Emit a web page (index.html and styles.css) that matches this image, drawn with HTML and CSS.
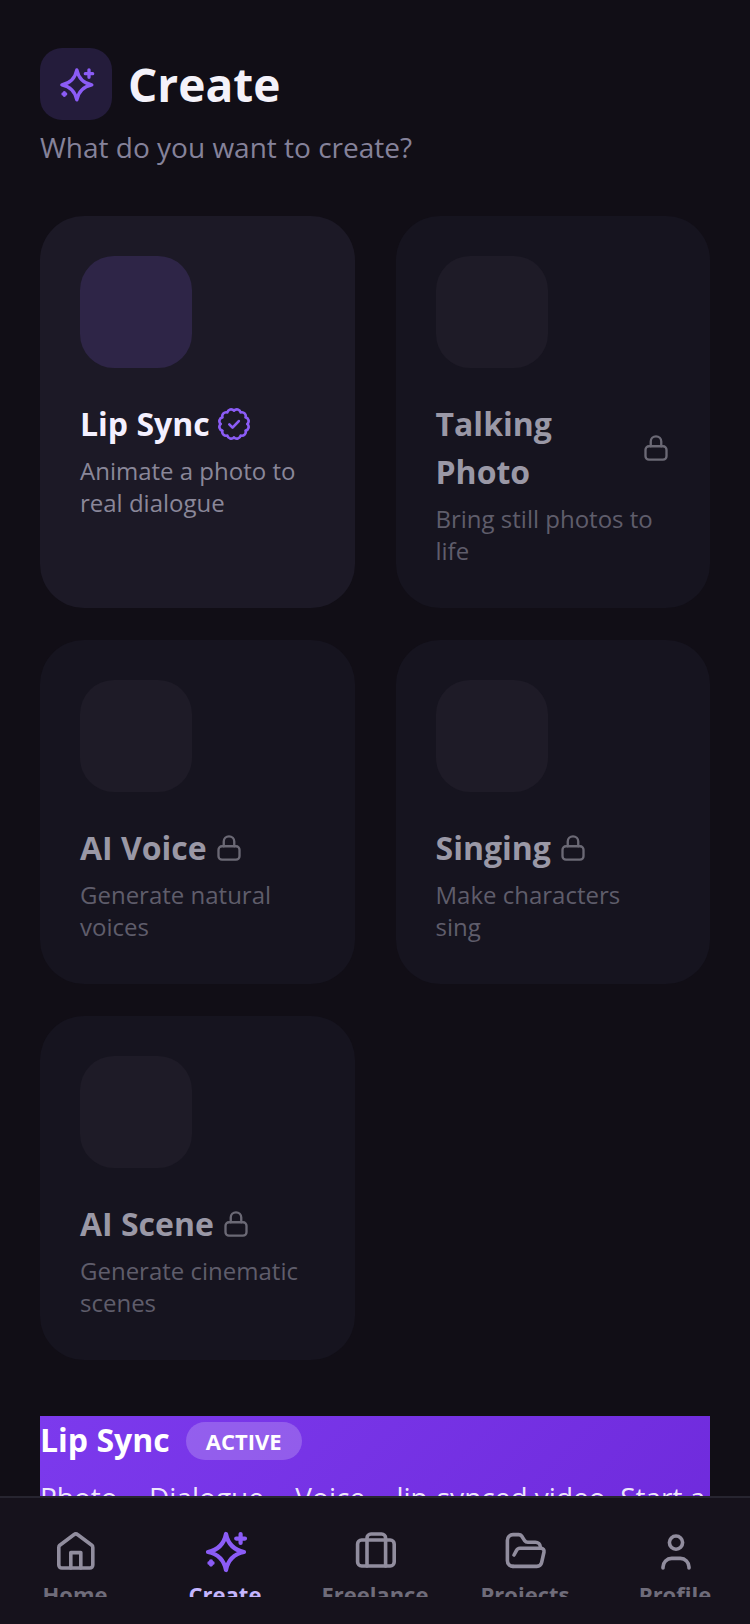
FILE: index.html
```html
<!DOCTYPE html>
<html lang="en">
<head>
<meta charset="utf-8">
<title>Create</title>
<link rel="stylesheet" href="styles.css">
</head>
<body>
<svg class="sprite" width="0" height="0" aria-hidden="true">
  <defs>
    <symbol id="sparkle" viewBox="0 0 24 24"><path d="M12.500 3.500C13.500 8.500 16.500 11.500 21.500 12.500 16.500 13.500 13.500 16.500 12.500 21.500 11.500 16.500 8.500 13.500 3.500 12.500 8.500 11.500 11.500 8.500 12.500 3.500Z"/><path d="M19.800 3.500V8M17.600 5.800H22"/><path d="M5 17.200V18.800M4.200 18H5.800"/></symbol>
    <symbol id="lock" viewBox="0 0 24 24"><rect x="3" y="10.500" width="18" height="11.500" rx="3"/><path d="M7.500 10.500V6.500a4.500 4.500 0 0 1 9 0v4"/></symbol>
    <symbol id="badge" viewBox="0 0 24 24"><path d="M22 12A2.900 2.900 0 0 1 20.660 17 2.900 2.900 0 0 1 17 20.660 2.900 2.900 0 0 1 12 22 2.900 2.900 0 0 1 7 20.660 2.900 2.900 0 0 1 3.340 17 2.900 2.900 0 0 1 2 12 2.900 2.900 0 0 1 3.340 7 2.900 2.900 0 0 1 7 3.340 2.900 2.900 0 0 1 12 2 2.900 2.900 0 0 1 17 3.340 2.900 2.900 0 0 1 20.660 7 2.900 2.900 0 0 1 22 12Z"/><path d="M8.500 12.300l2.400 2.400 4.700-4.900"/></symbol>
  </defs>
</svg>
<div class="app">
  <main class="content">
    <header class="page-head">
      <div class="title-row">
        <span class="head-icon"><svg class="icon icon-40 accent"><use href="#sparkle"/></svg></span>
        <h1 class="page-title">Create</h1>
      </div>
      <p class="page-sub">What do you want to create?</p>
    </header>

    <section class="grid">
      <article class="card card-active">
        <div class="card-icon"></div>
        <div class="card-title"><h2 class="card-name">Lip Sync</h2><svg class="icon icon-32 accent"><use href="#badge"/></svg></div>
        <p class="card-desc">Animate a photo to real dialogue</p>
      </article>
      <article class="card">
        <div class="card-icon"></div>
        <div class="card-title"><h2 class="card-name">Talking Photo</h2><svg class="icon icon-28 muted"><use href="#lock"/></svg></div>
        <p class="card-desc">Bring still photos to life</p>
      </article>
      <article class="card">
        <div class="card-icon"></div>
        <div class="card-title"><h2 class="card-name">AI Voice</h2><svg class="icon icon-28 muted"><use href="#lock"/></svg></div>
        <p class="card-desc">Generate natural voices</p>
      </article>
      <article class="card">
        <div class="card-icon"></div>
        <div class="card-title"><h2 class="card-name">Singing</h2><svg class="icon icon-28 muted"><use href="#lock"/></svg></div>
        <p class="card-desc">Make characters sing</p>
      </article>
      <article class="card">
        <div class="card-icon"></div>
        <div class="card-title"><h2 class="card-name">AI Scene</h2><svg class="icon icon-28 muted"><use href="#lock"/></svg></div>
        <p class="card-desc">Generate cinematic scenes</p>
      </article>
    </section>

    <section class="banner">
      <div class="banner-head"><h2 class="banner-title">Lip Sync</h2><span class="pill">ACTIVE</span></div>
      <p class="banner-text">Photo <span class="arrow">→</span> Dialogue <span class="arrow">→</span> Voice <span class="arrow">→</span> lip-synced video. Start a new project today.</p>
    </section>
  </main>

  <nav class="nav">
    <a class="nav-item">
      <svg class="icon icon-48" viewBox="0 0 24 24"><path d="M3.900 10.200a1.500 1.500 0 0 1 .5-1.100L11.400 3.900a1.500 1.500 0 0 1 2 0l7 5.200a1.500 1.500 0 0 1 .5 1.100V19a1.500 1.500 0 0 1-1.500 1.500H5.400A1.500 1.500 0 0 1 3.900 19Z"/><path d="M9.900 20.500V12.800h5v7.700"/></svg>
      <span class="nav-label">Home</span>
    </a>
    <a class="nav-item nav-active">
      <svg class="icon icon-48"><use href="#sparkle"/></svg>
      <span class="nav-label">Create</span>
    </a>
    <a class="nav-item">
      <svg class="icon icon-48" viewBox="0 0 24 24"><rect x="3.300" y="6.500" width="18.300" height="13" rx="2"/><path d="M8 19.500V5.500a2 2 0 0 1 2-2h5.300a2 2 0 0 1 2 2v14"/></svg>
      <span class="nav-label">Freelance</span>
    </a>
    <a class="nav-item">
      <svg class="icon icon-48" viewBox="0 0 24 24"><path d="M6 19.700a2.800 2.800 0 0 1-2.800-2.800V6.600a2.800 2.800 0 0 1 2.800-2.800h2.800a2 2 0 0 1 1.600.8l1.400 2.200a2 2 0 0 0 1.600.8h3.800a2.500 2.500 0 0 1 2.500 2.400v.6"/><path d="M6.500 14l1.200-2.200a2 2 0 0 1 1.800-1.200H20a1.500 1.500 0 0 1 1.500 1.900l-1.200 5.300a2.500 2.500 0 0 1-2.400 1.900H6"/></svg>
      <span class="nav-label">Projects</span>
    </a>
    <a class="nav-item">
      <svg class="icon icon-48" viewBox="0 0 24 24"><circle cx="12.500" cy="7.800" r="3.300"/><path d="M6 20.500V20a4.300 4.300 0 0 1 4.300-4.300h4.400a4.300 4.300 0 0 1 4.300 4.300v.5"/></svg>
      <span class="nav-label">Profile</span>
    </a>
  </nav>
</div>
</body>
</html>
```

FILE: styles.css
```css
* { box-sizing: border-box; margin: 0; padding: 0; }

html, body {
  width: 750px;
  height: 1624px;
  overflow: hidden;
  background: #110e16;
  font-family: "Open Sans", "DejaVu Sans", sans-serif;
}

.sprite { display: block; }

.app {
  display: flex;
  flex-direction: column;
  height: 1624px;
}

.content {
  flex: 1;
  min-height: 0;
  overflow: hidden;
  padding: 48px 40px 0;
}

.icon {
  display: block;
  flex: none;
  fill: none;
  stroke: currentColor;
  stroke-width: 2;
  stroke-linecap: round;
  stroke-linejoin: round;
}
.icon-28 { width: 28px; height: 28px; }
.icon-32 { width: 32px; height: 32px; }
.icon-40 { width: 40px; height: 40px; }
.icon-48 { width: 48px; height: 48px; stroke-width: 1.8; }
.accent { color: #8b5cf6; }
.muted { color: #6b6975; }

.title-row { display: flex; align-items: center; gap: 16px; }

.head-icon {
  width: 72px;
  height: 72px;
  border-radius: 22px;
  background: #241c3b;
  display: flex;
  align-items: center;
  justify-content: center;
}

.page-title {
  font-size: 46px;
  line-height: 72px;
  font-weight: 700;
  color: #f4f2fa;
}

.page-sub {
  margin-top: 7px;
  font-size: 28px;
  line-height: 40px;
  color: #85829a;
}

.grid {
  margin-top: 49px;
  display: grid;
  grid-template-columns: 1fr 1fr;
  column-gap: 41px;
  row-gap: 32px;
}

.card {
  padding: 40px 40px 41px;
  border-radius: 44px;
  background: #16141f;
}
.card-active { background: #1c1926; }

.card-icon {
  width: 112px;
  height: 112px;
  border-radius: 34px;
  background: #1e1b27;
}
.card-active .card-icon { background: #2e2547; }

.card-title {
  margin-top: 32px;
  display: flex;
  align-items: center;
  gap: 8px;
}

.card-name {
  font-size: 32px;
  line-height: 48px;
  font-weight: 700;
  color: #9a98a6;
}
.card-active .card-name { color: #f4f0ff; }

.card-desc {
  margin-top: 7px;
  font-size: 24px;
  line-height: 32px;
  color: #5f5d6b;
}
.card-active .card-desc { color: #8a8799; }

.banner {
  margin-top: 56px;
  height: 240px;
  color: #fff;
  background: linear-gradient(135deg, #7c3aed, #6d28d9);
}

.banner-head { display: flex; align-items: center; gap: 16px; height: 50px; }

.banner-title { font-size: 32px; line-height: 48px; font-weight: 700; padding-bottom: 2px; }

.pill {
  padding: 0 20px;
  height: 38px;
  line-height: 38px;
  border-radius: 19px;
  background: rgba(255, 255, 255, 0.2);
  font-size: 22px;
  font-weight: 700;
}

.banner-text {
  margin-top: 11px;
  font-size: 28px;
  line-height: 40px;
  color: rgba(255, 255, 255, 0.9);
}

.arrow { font-family: "Liberation Mono", monospace; }

.nav {
  flex: none;
  height: 128px;
  padding-bottom: 27px;
  display: grid;
  grid-template-columns: repeat(5, 1fr);
  border-top: 2px solid #272530;
  background: #16121c;
}

.nav-item {
  overflow: hidden;
  padding-top: 29px;
  display: flex;
  flex-direction: column;
  align-items: center;
  gap: 4px;
  color: #918d9e;
}
.nav-active { color: #8b5cf6; }
.nav-active .icon { stroke-width: 2.1; }

.nav-label {
  font-size: 22px;
  line-height: 30px;
  font-weight: 700;
  color: #6f6c7a;
}
.nav-active .nav-label { color: #c4b5fd; }
```
